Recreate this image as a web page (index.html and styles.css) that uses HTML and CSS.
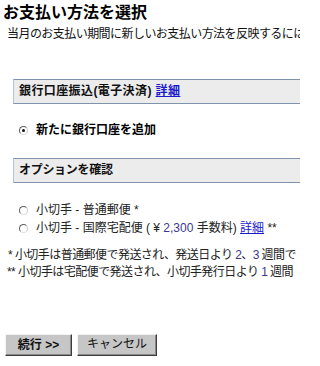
FILE: index.html
```html
<!DOCTYPE html>
<html lang="ja">
<head>
<meta charset="utf-8">
<link rel="stylesheet" href="styles.css">
</head>
<body>
<div class="page">
  <h1 class="title">お支払い方法を選択</h1>
  <p class="lead">当月のお支払い期間に新しいお支払い方法を反映するには</p>

  <div class="section section-first">銀行口座振込(電子決済) <a class="link" href="#">詳細</a></div>

  <div class="radio-row radio-single">
    <span class="radio checked"></span>
    <span class="radio-label bold">新たに銀行口座を追加</span>
  </div>

  <div class="section section-second">オプションを確認</div>

  <div class="radio-list">
    <div class="radio-row">
      <span class="radio"></span>
      <span class="radio-label">小切手 - 普通郵便 *</span>
    </div>
    <div class="radio-row">
      <span class="radio"></span>
      <span class="radio-label">小切手 - 国際宅配便 ( ¥ <span class="num">2,300</span> 手数料) <a class="link" href="#">詳細</a> **</span>
    </div>
  </div>

  <div class="notes">
    <div class="note note-one">* 小切手は普通郵便で発送され、発送日より <span class="num">2</span>、<span class="num">3</span> 週間で</div>
    <div class="note">** 小切手は宅配便で発送され、小切手発行日より <span class="num">1</span> 週間</div>
  </div>

  <div class="buttons">
    <button class="btn btn-primary" type="button">続行 &gt;&gt;</button>
    <button class="btn btn-cancel" type="button">キャンセル</button>
  </div>
</div>
</body>
</html>
```

FILE: styles.css
```css
html, body {
  margin: 0;
  padding: 0;
  background: #ffffff;
}

body {
  width: 300px;
  height: 366px;
  overflow: hidden;
  font-family: "Liberation Sans", "Noto Sans CJK JP", sans-serif;
  font-size: 12px;
  color: #111111;
}

.page {
  display: flex;
  flex-direction: column;
  width: 300px;
}

.title {
  margin: 0 0 0 3px;
  padding-top: 3px;
  font-size: 16px;
  line-height: 20px;
  font-weight: bold;
  color: #000000;
  white-space: nowrap;
}

.lead {
  margin: 4px 0 0 7px;
  line-height: 14px;
  white-space: nowrap;
  letter-spacing: -0.55px;
}

.section {
  margin-left: 13px;
  margin-right: -20px;
  height: 23px;
  line-height: 23px;
  padding-left: 5px;
  background: #ececec;
  border-top: 1px solid #7f93ad;
  border-bottom: 1px solid #7f93ad;
  border-left: 1px solid #b9c4d3;
  font-weight: bold;
  white-space: nowrap;
}

.section-first {
  margin-top: 38px;
  letter-spacing: 0.4px;
}

.section-second {
  margin-top: 19px;
  letter-spacing: -0.3px;
}

.link {
  color: #1a1acc;
  text-decoration: underline;
}

.radio-row {
  display: flex;
  align-items: center;
  height: 18px;
  padding-left: 19px;
  white-space: nowrap;
}

.radio-single {
  margin-top: 17px;
}

.radio-list {
  margin-top: 18px;
  display: flex;
  flex-direction: column;
}

.radio {
  position: relative;
  flex: none;
  width: 7px;
  height: 7px;
  border-radius: 50%;
  background: #ffffff;
  border: 1px solid;
  border-color: #5e5e5e #c9c9c9 #e0e0e0 #5e5e5e;
  margin-right: 8px;
}

.radio.checked::after {
  content: "";
  position: absolute;
  left: 2px;
  top: 2px;
  width: 3px;
  height: 3px;
  border-radius: 50%;
  background: #111111;
}

.radio-label {
  line-height: 18px;
  color: #222222;
}

.bold {
  font-weight: bold;
  color: #000000;
}

.num {
  color: #3a3a8c;
}

.notes {
  margin-top: 10px;
  display: flex;
  flex-direction: column;
}

.note {
  margin-left: 7px;
  line-height: 17px;
  white-space: nowrap;
  color: #222222;
  letter-spacing: -0.55px;
}

.note-one {
  margin-left: 8px;
}

.buttons {
  display: flex;
  gap: 5px;
  margin-top: 53px;
  margin-left: 5px;
}

.btn {
  height: 22px;
  padding: 0;
  margin: 0;
  background: #c6c6c6;
  border: 1px solid;
  border-color: #f2f2f2 #3c3c3c #3c3c3c #f2f2f2;
  box-shadow: inset -1px -1px 0 #8a8a8a;
  font-family: "Liberation Sans", "Noto Sans CJK JP", sans-serif;
  font-size: 12px;
  color: #111111;
  line-height: 18px;
}

.btn-primary {
  width: 67px;
  font-weight: bold;
}

.btn-cancel {
  width: 80px;
  padding-bottom: 3px;
}
```
